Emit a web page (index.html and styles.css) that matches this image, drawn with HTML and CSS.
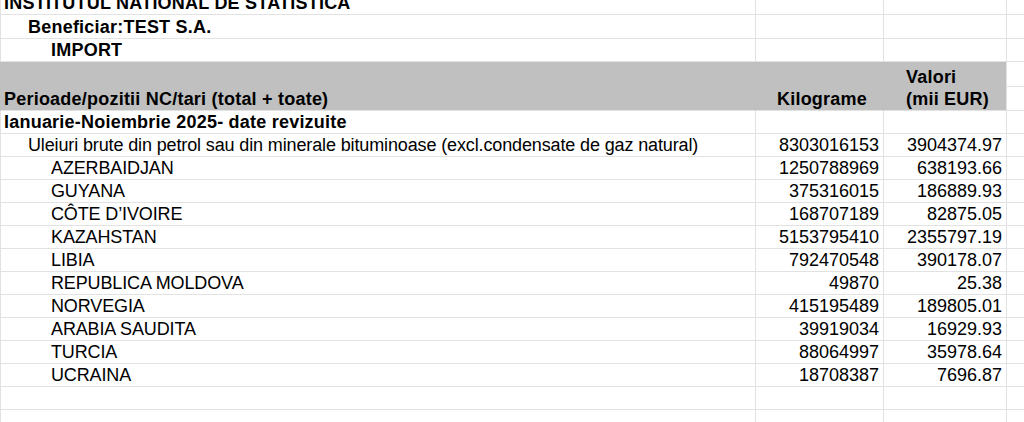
FILE: index.html
```html
<!DOCTYPE html>
<html lang="ro">
<head>
<meta charset="utf-8">
<title>Import</title>
<link rel="stylesheet" href="styles.css">
</head>
<body>
<div class="sheet">
  <div class="row r-title">
    <div class="c c1 b clip"><span>INSTITUTUL NATIONAL DE STATISTICA</span></div><div class="c"></div><div class="c"></div><div class="c c4"></div>
  </div>
  <div class="row r-24">
    <div class="c c1 b l1">Beneficiar:TEST S.A.</div><div class="c"></div><div class="c"></div><div class="c c4"></div>
  </div>
  <div class="row">
    <div class="c c1 b l2">IMPORT</div><div class="c"></div><div class="c"></div><div class="c c4"></div>
  </div>
  <div class="row head">
    <div class="c c1 b g">Perioade/pozitii NC/tari (total + toate)</div>
    <div class="c b g kg">Kilograme</div>
    <div class="c b g val"><div>Valori<br>(mii EUR)</div></div>
    <div class="c c4 split"><div class="sub"></div></div>
  </div>
  <div class="row">
    <div class="c c1 b">Ianuarie-Noiembrie 2025- date revizuite</div><div class="c"></div><div class="c"></div><div class="c c4"></div>
  </div>
  <div class="row">
    <div class="c c1 l1 txt">Uleiuri brute din petrol sau din minerale bituminoase (excl.condensate de gaz natural)</div><div class="c num">8303016153</div><div class="c num">3904374.97</div><div class="c c4"></div>
  </div>
  <div class="row">
    <div class="c c1 l2 txt">AZERBAIDJAN</div><div class="c num">1250788969</div><div class="c num">638193.66</div><div class="c c4"></div>
  </div>
  <div class="row">
    <div class="c c1 l2 txt">GUYANA</div><div class="c num">375316015</div><div class="c num">186889.93</div><div class="c c4"></div>
  </div>
  <div class="row">
    <div class="c c1 l2 txt">CÔTE D’IVOIRE</div><div class="c num">168707189</div><div class="c num">82875.05</div><div class="c c4"></div>
  </div>
  <div class="row">
    <div class="c c1 l2 txt">KAZAHSTAN</div><div class="c num">5153795410</div><div class="c num">2355797.19</div><div class="c c4"></div>
  </div>
  <div class="row">
    <div class="c c1 l2 txt">LIBIA</div><div class="c num">792470548</div><div class="c num">390178.07</div><div class="c c4"></div>
  </div>
  <div class="row">
    <div class="c c1 l2 txt">REPUBLICA MOLDOVA</div><div class="c num">49870</div><div class="c num">25.38</div><div class="c c4"></div>
  </div>
  <div class="row">
    <div class="c c1 l2 txt">NORVEGIA</div><div class="c num">415195489</div><div class="c num">189805.01</div><div class="c c4"></div>
  </div>
  <div class="row">
    <div class="c c1 l2 txt">ARABIA SAUDITA</div><div class="c num">39919034</div><div class="c num">16929.93</div><div class="c c4"></div>
  </div>
  <div class="row">
    <div class="c c1 l2 txt">TURCIA</div><div class="c num">88064997</div><div class="c num">35978.64</div><div class="c c4"></div>
  </div>
  <div class="row">
    <div class="c c1 l2 txt">UCRAINA</div><div class="c num">18708387</div><div class="c num">7696.87</div><div class="c c4"></div>
  </div>
  <div class="row">
    <div class="c c1"></div><div class="c"></div><div class="c"></div><div class="c c4"></div>
  </div>
  <div class="row">
    <div class="c c1"></div><div class="c"></div><div class="c"></div><div class="c c4"></div>
  </div>
</div>
</body>
</html>
```

FILE: styles.css
```css
* { box-sizing: border-box; }
html, body { margin: 0; padding: 0; background: #ffffff; }
body {
  font-family: "Liberation Sans", Arial, sans-serif;
  font-size: 18px;
  color: #000000;
  overflow: hidden;
}
.sheet { width: 1024px; }
.row {
  display: grid;
  grid-template-columns: 756px 128px 123px 1fr;
  grid-template-rows: minmax(0, 1fr);
  height: 23px;
}
.r-title { height: 15px; }
.r-24 { height: 24px; }
.c {
  display: flex;
  align-items: flex-end;
  border-right: 1px solid #e2e2e2;
  border-bottom: 1px solid #e2e2e2;
  line-height: 22px;
  white-space: nowrap;
  min-width: 0;
  min-height: 0;
}
.clip { overflow: hidden; }
.clip span { flex: none; }
.c1 { border-left: 1px solid #e2e2e2; padding-left: 3px; }
.c4 { border-right: none; }
.b { font-weight: bold; letter-spacing: 0.22px; }
.txt { letter-spacing: -0.13px; }
.l1 { padding-left: 27px; }
.l2 { padding-left: 50px; }
.num { justify-content: flex-end; padding-right: 4px; }

.head { height: 49px; }
.g { background: #c0c0c0; border-right-color: #c0c0c0; }
.head .c1 { border-left-color: #c0c0c0; }
.head .val { border-right-color: #e2e2e2; padding-left: 22px; }
.kg { justify-content: flex-end; padding-right: 16px; }
.split { align-items: flex-start; }
.sub { width: 100%; height: 25px; border-bottom: 1px solid #e2e2e2; }
```
